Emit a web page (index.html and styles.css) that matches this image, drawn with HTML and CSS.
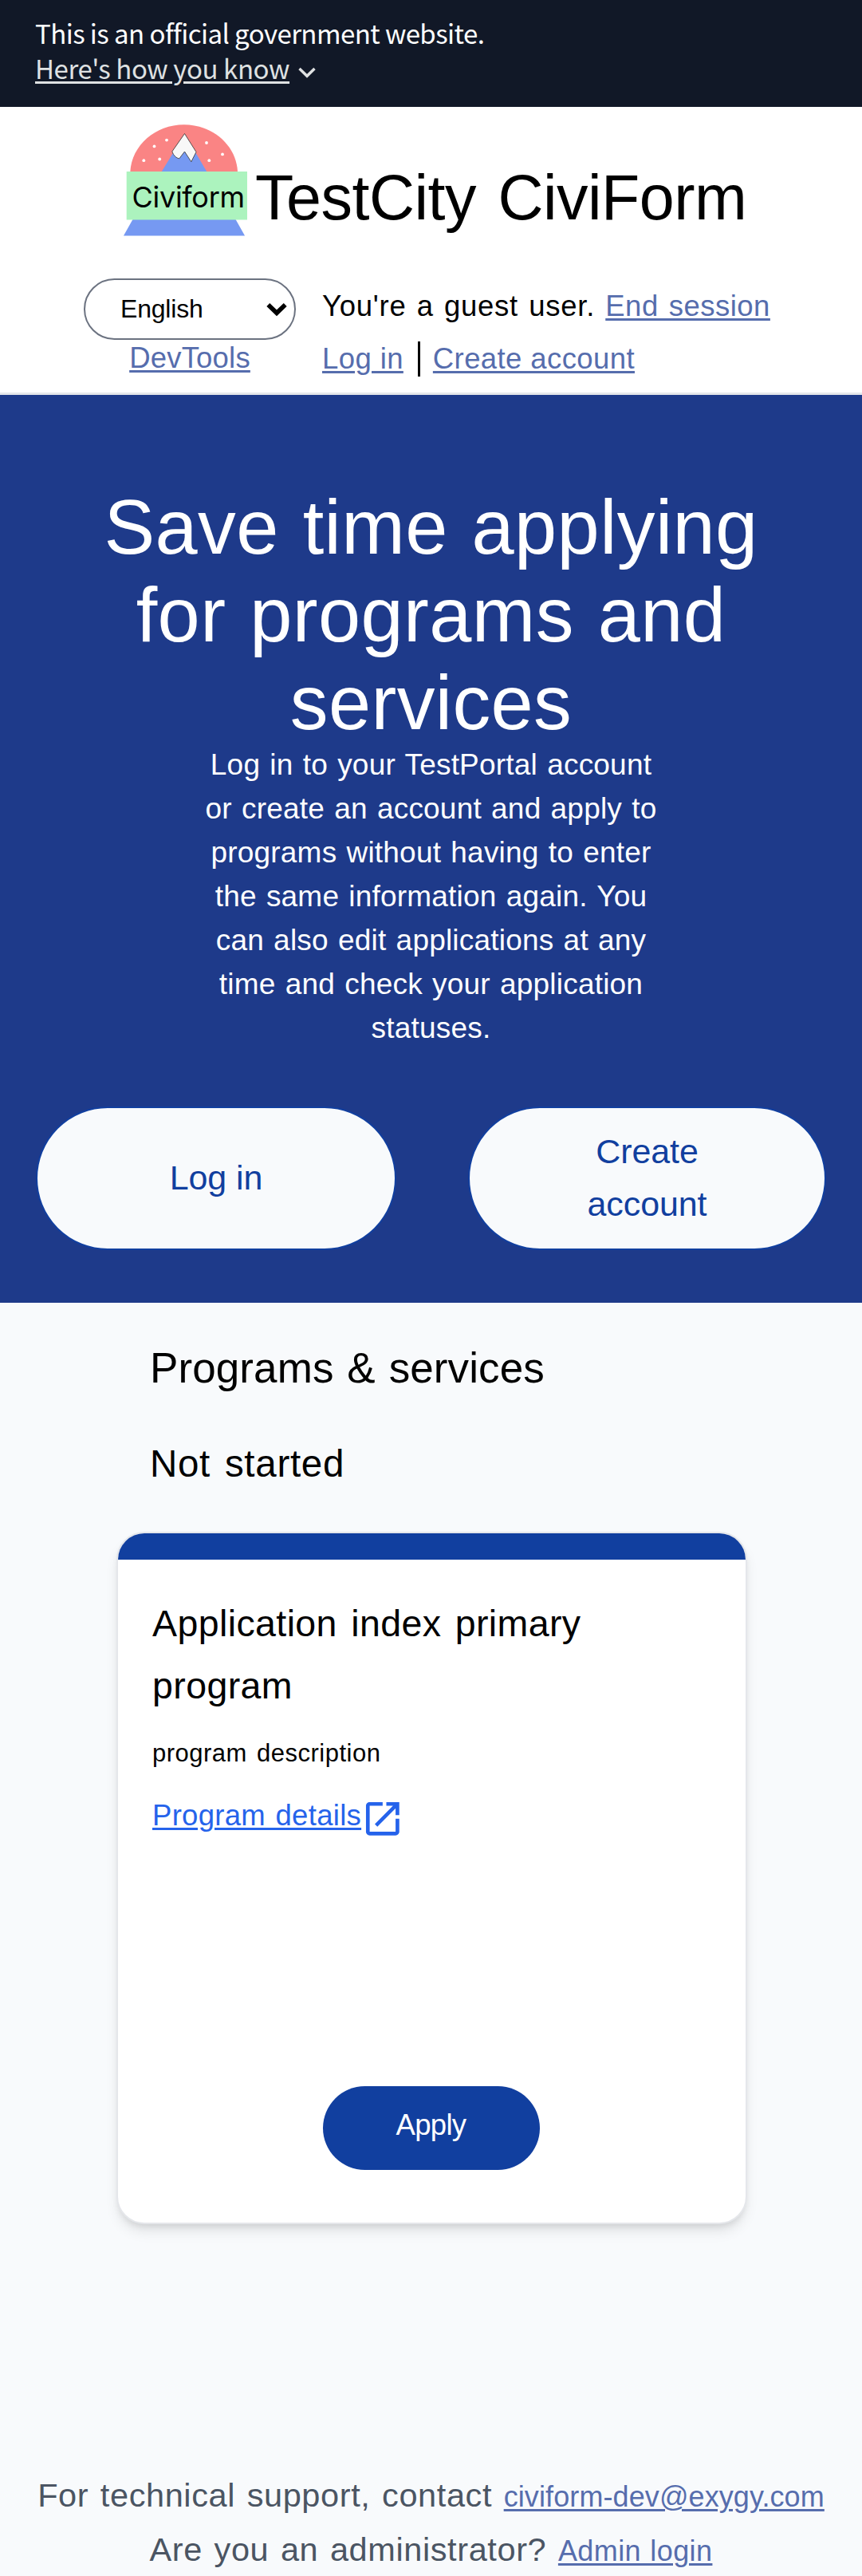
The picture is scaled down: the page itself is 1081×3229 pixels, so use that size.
FILE: index.html
```html
<!DOCTYPE html>
<html lang="en">
<head>
<meta charset="utf-8">
<title>TestCity CiviForm</title>
<link rel="stylesheet" href="styles.css">
</head>
<body>
<section class="banner">
  <p class="banner-text">This is an official government website.</p>
  <p class="banner-more"><a class="banner-link">Here's how you know</a><svg class="banner-chevron" viewBox="0 0 24 16"><path d="M2.500 3 12 12.300 21.500 3" fill="none" stroke="#dfe1e2" stroke-width="3.400"/></svg></p>
</section>

<header class="header">
  <div class="brand">
    <svg class="logo" viewBox="155 156 155 140">
      <path d="M163.300 215.500C165 182 195 156.300 230.700 156.300S296.500 182 298 215.500Z" fill="#fa8484"/>
      <path d="M202.500 215.500 231.500 168 259.500 215.500Z" fill="#7699f2"/>
      <path d="M231.500 167.500 246 190.500 239.800 202.800 231.500 190 224.800 198.800Q219 198 215.800 190Z" fill="#f8f8f8" stroke="#333" stroke-width=".8"/>
      <g fill="#fff"><circle cx="209" cy="175.600" r="1.900"/><circle cx="193.500" cy="183.400" r="1.900"/><circle cx="180.300" cy="201.200" r="1.900"/><circle cx="200.200" cy="199.500" r="1.900"/><circle cx="259" cy="179" r="1.900"/><circle cx="279" cy="193.400" r="1.900"/><circle cx="262.300" cy="201.200" r="1.900"/></g>
      <path d="M166.500 275H295.500L307 295.500H155Z" fill="#7699f2"/>
      <rect x="158.700" y="215" width="151.300" height="60.500" fill="#acf3be"/>
      <text class="logo-text" x="165.500" y="260">Civiform</text>
    </svg>
    <h1 class="site-name">TestCity CiviForm</h1>
  </div>
  <div class="controls">
    <div class="tools">
      <div class="select"><span>English</span><svg class="select-arrow" viewBox="0 0 26 18"><path d="M2.300 3 13 13.300 23.700 3" fill="none" stroke="#000" stroke-width="5.600"/></svg></div>
      <p class="devtools"><a class="link">DevTools</a></p>
    </div>
    <div class="account">
      <p class="guest">You're a guest user. <a class="link end">End session</a></p>
      <p class="signin"><a class="link">Log in</a><span class="bar"></span><a class="link">Create account</a></p>
    </div>
  </div>
</header>

<section class="hero">
  <h2 class="hero-title">Save time applying<br>for programs and<br>services</h2>
  <p class="hero-text">Log in to your TestPortal account<br>or create an account and apply to<br>programs without having to enter<br>the same information again. You<br>can also edit applications at any<br>time and check your application<br>statuses.</p>
  <div class="hero-actions">
    <a class="pill">Log in</a>
    <a class="pill">Create<br>account</a>
  </div>
</section>

<main class="programs">
  <h2 class="programs-title">Programs &amp; services</h2>
  <h3 class="programs-group">Not started</h3>
  <article class="card">
    <div class="card-top"></div>
    <div class="card-body">
      <h4 class="card-title">Application index primary<br>program</h4>
      <p class="card-desc">program description</p>
      <a class="card-link"><span class="card-link-text">Program details</span><svg class="open-icon" viewBox="0 0 24 24" fill="#2563eb"><path d="M19 19H5V5h7V3H5c-1.110 0-2 .9-2 2v14c0 1.100.89 2 2 2h14c1.100 0 2-.9 2-2v-7h-2v7zM14 3v2h3.590l-9.830 9.830 1.410 1.410L19 6.410V10h2V3h-7z"/></svg></a>
      <a class="apply">Apply</a>
    </div>
  </article>
</main>

<footer class="footer">
  <p>For technical support, contact <a class="link email">civiform-dev@exygy.com</a></p>
  <p>Are you an administrator? <a class="link">Admin login</a></p>
</footer>
</body>
</html>
```
FILE: styles.css
```css
* { box-sizing: border-box; }
body, p, h1, h2, h3, h4 { margin: 0; font-weight: 400; }
body {
  background: #f8fafc;
  color: #000;
  font-family: "Liberation Sans", sans-serif;
}
svg { display: block; flex: none; }

.banner {
  height: 134px;
  padding: 19px 44px 0;
  background: #111827;
  color: #fff;
  font: 33px/44px "Noto Sans CJK SC", sans-serif;
}
.banner-text { letter-spacing: -.57px; }
.banner-more { display: flex; color: #dfe1e2; letter-spacing: -.43px; }
.banner-link { text-decoration: underline 3px; text-underline-offset: 3px; }
.banner-chevron { width: 24px; height: 16px; margin: 20px 0 0 10px; }

.header {
  height: 361px;
  background: #fff;
  border-bottom: 3px solid #e5e7eb;
}
.brand { display: flex; height: 215px; padding: 22px 0 0 155px; }
.logo { width: 155px; height: 140px; }
.logo-text { font: 36px Inter, sans-serif; letter-spacing: -.28px; }
.site-name { margin: 44px 0 0 10px; font-size: 79px; line-height: 96px; letter-spacing: -.5px; word-spacing: 6px; white-space: nowrap; }
.controls { display: flex; gap: 33px; padding-left: 105px; }
.tools { width: 266px; }
.select {
  display: flex;
  align-items: center;
  justify-content: space-between;
  height: 77px;
  padding: 0 9px 0 44px;
  border: 2.75px solid #6b7280;
  border-radius: 39px;
  font-size: 32px;
  letter-spacing: -.2px;
}
.select-arrow { width: 26px; height: 18px; }
.devtools { text-align: center; font-size: 36.5px; line-height: 46px; letter-spacing: .2px; }
.account { padding-top: 2px; font-size: 36.5px; line-height: 66px; letter-spacing: .4px; white-space: nowrap; }
.guest { letter-spacing: .75px; word-spacing: 2.3px; }
.end { letter-spacing: .5px; }
.signin { display: flex; align-items: center; }
.bar { width: 3px; height: 44px; margin: 0 16px 0 18px; background: #000; }
.link { color: #566dad; text-decoration: underline 2.75px; text-underline-offset: 3px; }

.hero {
  height: 1138px;
  padding-top: 111px;
  background: #1e3a8a;
  color: #fff;
  text-align: center;
}
.hero-title { font-size: 95.5px; line-height: 110px; letter-spacing: .4px; word-spacing: 3px; }
.hero-text { margin-top: -5px; font-size: 37px; line-height: 55px; letter-spacing: .2px; word-spacing: 1.7px; }
.hero-actions {
  display: grid;
  grid-template-columns: 452px 449px;
  gap: 90px;
  margin: 71px 0 0 45px;
}
.pill {
  display: flex;
  align-items: center;
  justify-content: center;
  height: 180px;
  padding-bottom: 2px;
  border: 2.75px solid #113f9f;
  border-radius: 90px;
  background: #f8fafc;
  color: #113f9f;
  font-size: 43px;
  line-height: 66px;
  letter-spacing: -.1px;
}

.programs { padding: 52px 0 0 146px; }
.programs-title { padding-left: 42px; font-size: 53px; line-height: 60px; letter-spacing: .1px; word-spacing: 2px; }
.programs-group { margin-top: 60px; padding-left: 42px; font-size: 47.5px; line-height: 60px; letter-spacing: .7px; word-spacing: 4px; }
.card {
  display: flex;
  flex-direction: column;
  width: 791px;
  height: 868px;
  margin-top: 55px;
  overflow: hidden;
  border: 2.75px solid #e5e7eb;
  border-radius: 35px;
  background: #fff;
  box-shadow: 0 11px 17px -3px rgba(0,0,0,.1), 0 5px 8px -3px rgba(0,0,0,.1);
}
.card-top { flex: none; height: 33px; background: #113f9f; }
.card-body { display: flex; flex: 1; flex-direction: column; padding: 42px 42px 66px 43px; }
.card-title { font-size: 46.5px; line-height: 77.5px; letter-spacing: .4px; word-spacing: 4px; }
.card-desc { margin-top: 24px; font-size: 31px; line-height: 44px; letter-spacing: .5px; word-spacing: 3px; }
.card-link { display: flex; margin-top: 28px; color: #2563eb; font-size: 36.5px; line-height: 55px; letter-spacing: .3px; word-spacing: 2px; }
.card-link-text { text-decoration: underline 3px; text-underline-offset: 3px; }
.open-icon { width: 55.7px; height: 55.7px; margin: 4px 0 0 -1px; }
.apply {
  display: flex;
  align-items: center;
  justify-content: center;
  align-self: center;
  width: 272px;
  height: 105px;
  margin: auto 3px 0 0;
  padding-bottom: 8px;
  border-radius: 53px;
  background: #113f9f;
  color: #fff;
  font-size: 36.5px;
  letter-spacing: -.7px;
}

.footer { padding-top: 307px; color: #4b5563; text-align: center; font-size: 41.5px; line-height: 66px; letter-spacing: .6px; word-spacing: 2.5px; white-space: nowrap; }
.footer .link { font-size: 36px; letter-spacing: .4px; word-spacing: 1px; }
.footer .email { letter-spacing: .1px; }
```
